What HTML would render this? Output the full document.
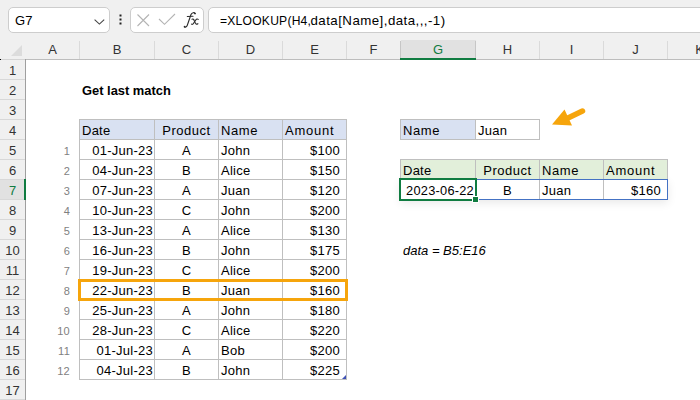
<!DOCTYPE html>
<html><head><meta charset="utf-8"><style>
*{margin:0;padding:0;box-sizing:border-box}
html,body{width:700px;height:400px;overflow:hidden;background:#fff;font-family:"Liberation Sans", sans-serif}
.a{position:absolute}
.t{position:absolute;white-space:nowrap;font-size:13px;line-height:20px;height:20px;color:#000;letter-spacing:0.25px}
.hl{position:absolute;white-space:nowrap;font-size:13px;line-height:19px;height:19px;color:#333;text-align:center}
.rn{position:absolute;white-space:nowrap;font-size:13px;line-height:19px;height:19px;color:#333;text-align:center;width:25px;left:0}
</style></head>
<body>
<div class="a" style="left:0;top:0;width:700px;height:40px;background:#f0f0f0"></div>
<div class="a" style="left:8px;top:7px;width:102px;height:26px;background:#fff;border:1px solid #cdcdcd;border-radius:5px"></div>
<div class="t" style="left:15px;top:11px;font-size:13px;line-height:20px;color:#000">G7</div>
<svg class="a" style="left:0;top:0" width="700" height="40"><polyline points="94.6,19.6 99.4,24.1 104.2,19.6" fill="none" stroke="#444" stroke-width="1.1"/><rect x="119.5" y="14.5" width="2" height="2" fill="#222"/><rect x="119.5" y="18.5" width="2" height="2" fill="#222"/><rect x="119.5" y="22.5" width="2" height="2" fill="#222"/></svg>
<div class="a" style="left:130px;top:7px;width:74px;height:26px;background:#fff;border:1px solid #cdcdcd;border-radius:5px"></div>
<svg class="a" style="left:0;top:0" width="700" height="40"><path d="M137.5,14.5 L149,26 M149,14.5 L137.5,26" stroke="#b4b4b4" stroke-width="1.1" fill="none"/><polyline points="159,19 164.5,24.3 175,14" stroke="#b4b4b4" stroke-width="1.1" fill="none"/></svg>
<svg class="a" style="left:0;top:0" width="700" height="40" fill="none" stroke="#2b2b2b" stroke-width="1.1" stroke-linecap="round"><path d="M195.2,13.6 C194.6,12.3 191.9,12.2 191.0,14.5 L187.3,25.2 C186.6,27.2 185.2,27.6 184.2,26.8"/><path d="M187.3,16.5 L193.0,16.3"/><path d="M192.0,19.2 C193.2,18.7 193.8,19.5 194.2,20.6 L195.4,23.3 C195.9,24.3 196.8,24.4 197.9,23.7"/><path d="M198.2,19.4 C197.5,18.7 196.6,18.9 195.9,19.8 L193.4,23.5 C192.8,24.4 192.1,24.5 191.5,24.1"/><circle cx="194.9" cy="13.5" r="0.85" fill="#2b2b2b" stroke="none"/><circle cx="184.7" cy="26.5" r="0.85" fill="#2b2b2b" stroke="none"/></svg>
<div class="a" style="left:208px;top:7px;width:520px;height:26px;background:#fff;border:1px solid #cdcdcd;border-radius:5px"></div>
<div class="t" style="left:220px;top:11px;font-size:13.3px;color:#000;transform:scaleX(0.91);transform-origin:0 0">=XLOOKUP(H4,</div>
<div class="t" style="left:310.5px;top:11px;font-size:13.3px;color:#000;letter-spacing:0.45px">data[Name],data,,,-1)</div>
<div class="a" style="left:0;top:40px;width:700px;height:19px;background:#f0f0f0"></div>
<div class="a" style="left:401px;top:40px;width:75px;height:19px;background:#e1e1e1"></div>
<div class="a" style="left:79px;top:41px;width:1px;height:18px;background:#dadada"></div>
<div class="a" style="left:154px;top:41px;width:1px;height:18px;background:#dadada"></div>
<div class="a" style="left:218px;top:41px;width:1px;height:18px;background:#dadada"></div>
<div class="a" style="left:282px;top:41px;width:1px;height:18px;background:#dadada"></div>
<div class="a" style="left:346px;top:41px;width:1px;height:18px;background:#dadada"></div>
<div class="a" style="left:400px;top:41px;width:1px;height:18px;background:#c6c6c6"></div>
<div class="a" style="left:475px;top:41px;width:1px;height:18px;background:#c6c6c6"></div>
<div class="a" style="left:539px;top:41px;width:1px;height:18px;background:#dadada"></div>
<div class="a" style="left:603px;top:41px;width:1px;height:18px;background:#dadada"></div>
<div class="a" style="left:667px;top:41px;width:1px;height:18px;background:#dadada"></div>
<div class="a" style="left:0;top:59px;width:25px;height:1px;background:#d4d4d4"></div>
<div class="a" style="left:25px;top:59px;width:675px;height:1px;background:#bdbdbd"></div>
<div class="a" style="left:400px;top:58px;width:76px;height:2px;background:#107c41"></div>
<svg class="a" style="left:0;top:40px" width="25" height="19"><polygon points="22,5 22,16 11,16" fill="#dcdcdc"/></svg>
<div class="hl" style="left:26px;top:40px;width:53px;color:#333">A</div>
<div class="hl" style="left:80px;top:40px;width:74px;color:#333">B</div>
<div class="hl" style="left:155px;top:40px;width:63px;color:#333">C</div>
<div class="hl" style="left:219px;top:40px;width:63px;color:#333">D</div>
<div class="hl" style="left:283px;top:40px;width:63px;color:#333">E</div>
<div class="hl" style="left:347px;top:40px;width:53px;color:#333">F</div>
<div class="hl" style="left:401px;top:40px;width:74px;color:#107c41">G</div>
<div class="hl" style="left:476px;top:40px;width:63px;color:#333">H</div>
<div class="hl" style="left:540px;top:40px;width:63px;color:#333">I</div>
<div class="hl" style="left:604px;top:40px;width:63px;color:#333">J</div>
<div class="hl" style="left:668px;top:40px;width:63px;color:#333">K</div>
<div class="a" style="left:0;top:60px;width:25px;height:340px;background:#f0f0f0"></div>
<div class="a" style="left:25px;top:59px;width:1px;height:341px;background:#9f9f9f"></div>
<div class="a" style="left:0;top:179px;width:25px;height:21px;background:#e1e1e1"></div>
<div class="a" style="left:0;top:59px;width:1px;height:1px;background:#000"></div>
<div class="rn" style="top:61px">1</div>
<div class="a" style="left:0;top:79px;width:25px;height:1px;background:#d8d8d8"></div>
<div class="rn" style="top:81px">2</div>
<div class="a" style="left:0;top:99px;width:25px;height:1px;background:#d8d8d8"></div>
<div class="rn" style="top:101px">3</div>
<div class="a" style="left:0;top:119px;width:25px;height:1px;background:#d8d8d8"></div>
<div class="rn" style="top:121px">4</div>
<div class="a" style="left:0;top:139px;width:25px;height:1px;background:#d8d8d8"></div>
<div class="rn" style="top:141px">5</div>
<div class="a" style="left:0;top:159px;width:25px;height:1px;background:#d8d8d8"></div>
<div class="rn" style="top:161px">6</div>
<div class="a" style="left:0;top:179px;width:25px;height:1px;background:#d8d8d8"></div>
<div class="rn" style="top:181px;color:#107c41">7</div>
<div class="a" style="left:0;top:199px;width:25px;height:1px;background:#d8d8d8"></div>
<div class="rn" style="top:201px">8</div>
<div class="a" style="left:0;top:219px;width:25px;height:1px;background:#d8d8d8"></div>
<div class="rn" style="top:221px">9</div>
<div class="a" style="left:0;top:239px;width:25px;height:1px;background:#d8d8d8"></div>
<div class="rn" style="top:241px">10</div>
<div class="a" style="left:0;top:259px;width:25px;height:1px;background:#d8d8d8"></div>
<div class="rn" style="top:261px">11</div>
<div class="a" style="left:0;top:279px;width:25px;height:1px;background:#d8d8d8"></div>
<div class="rn" style="top:281px">12</div>
<div class="a" style="left:0;top:299px;width:25px;height:1px;background:#d8d8d8"></div>
<div class="rn" style="top:301px">13</div>
<div class="a" style="left:0;top:319px;width:25px;height:1px;background:#d8d8d8"></div>
<div class="rn" style="top:321px">14</div>
<div class="a" style="left:0;top:339px;width:25px;height:1px;background:#d8d8d8"></div>
<div class="rn" style="top:341px">15</div>
<div class="a" style="left:0;top:359px;width:25px;height:1px;background:#d8d8d8"></div>
<div class="rn" style="top:361px">16</div>
<div class="a" style="left:0;top:379px;width:25px;height:1px;background:#d8d8d8"></div>
<div class="rn" style="top:381px">17</div>
<div class="a" style="left:0;top:399px;width:25px;height:1px;background:#d8d8d8"></div>
<div class="a" style="left:24px;top:179px;width:2px;height:21px;background:#107c41"></div>
<div class="t" style="left:82px;top:81px;font-weight:bold;font-size:12.9px;letter-spacing:0">Get last match</div>
<div class="a" style="left:79px;top:119px;width:76px;height:21px;background:#d9e1f2"></div>
<div class="a" style="left:154px;top:119px;width:65px;height:21px;background:#d9e1f2"></div>
<div class="a" style="left:218px;top:119px;width:65px;height:21px;background:#d9e1f2"></div>
<div class="a" style="left:282px;top:119px;width:65px;height:21px;background:#d9e1f2"></div>
<div class="a" style="left:79px;top:119px;width:268px;height:1px;background:#bfbfbf"></div>
<div class="a" style="left:79px;top:139px;width:268px;height:1px;background:#bfbfbf"></div>
<div class="a" style="left:79px;top:159px;width:268px;height:1px;background:#bfbfbf"></div>
<div class="a" style="left:79px;top:179px;width:268px;height:1px;background:#bfbfbf"></div>
<div class="a" style="left:79px;top:199px;width:268px;height:1px;background:#bfbfbf"></div>
<div class="a" style="left:79px;top:219px;width:268px;height:1px;background:#bfbfbf"></div>
<div class="a" style="left:79px;top:239px;width:268px;height:1px;background:#bfbfbf"></div>
<div class="a" style="left:79px;top:259px;width:268px;height:1px;background:#bfbfbf"></div>
<div class="a" style="left:79px;top:279px;width:268px;height:1px;background:#bfbfbf"></div>
<div class="a" style="left:79px;top:299px;width:268px;height:1px;background:#bfbfbf"></div>
<div class="a" style="left:79px;top:319px;width:268px;height:1px;background:#bfbfbf"></div>
<div class="a" style="left:79px;top:339px;width:268px;height:1px;background:#bfbfbf"></div>
<div class="a" style="left:79px;top:359px;width:268px;height:1px;background:#bfbfbf"></div>
<div class="a" style="left:79px;top:379px;width:268px;height:1px;background:#bfbfbf"></div>
<div class="a" style="left:79px;top:119px;width:1px;height:261px;background:#bfbfbf"></div>
<div class="a" style="left:154px;top:119px;width:1px;height:261px;background:#bfbfbf"></div>
<div class="a" style="left:218px;top:119px;width:1px;height:261px;background:#bfbfbf"></div>
<div class="a" style="left:282px;top:119px;width:1px;height:261px;background:#bfbfbf"></div>
<div class="a" style="left:346px;top:119px;width:1px;height:261px;background:#bfbfbf"></div>
<div class="t" style="left:82px;top:121px;">Date</div>
<div class="t" style="left:155px;top:121px;width:63px;text-align:center;letter-spacing:0.5px">Product</div>
<div class="t" style="left:221px;top:121px;letter-spacing:0.6px">Name</div>
<div class="t" style="left:285px;top:121px;letter-spacing:0.75px">Amount</div>
<div class="t" style="left:26px;top:141px;width:44px;text-align:right;color:#7f7f7f;font-size:11px">1</div>
<div class="t" style="left:80px;top:141px;width:73px;text-align:right;">01-Jun-23</div>
<div class="t" style="left:155px;top:141px;width:63px;text-align:center;">A</div>
<div class="t" style="left:221px;top:141px;">John</div>
<div class="t" style="left:283px;top:141px;width:57px;text-align:right;">$100</div>
<div class="t" style="left:26px;top:161px;width:44px;text-align:right;color:#7f7f7f;font-size:11px">2</div>
<div class="t" style="left:80px;top:161px;width:73px;text-align:right;">04-Jun-23</div>
<div class="t" style="left:155px;top:161px;width:63px;text-align:center;">B</div>
<div class="t" style="left:221px;top:161px;">Alice</div>
<div class="t" style="left:283px;top:161px;width:57px;text-align:right;">$150</div>
<div class="t" style="left:26px;top:181px;width:44px;text-align:right;color:#7f7f7f;font-size:11px">3</div>
<div class="t" style="left:80px;top:181px;width:73px;text-align:right;">07-Jun-23</div>
<div class="t" style="left:155px;top:181px;width:63px;text-align:center;">A</div>
<div class="t" style="left:221px;top:181px;">Juan</div>
<div class="t" style="left:283px;top:181px;width:57px;text-align:right;">$120</div>
<div class="t" style="left:26px;top:201px;width:44px;text-align:right;color:#7f7f7f;font-size:11px">4</div>
<div class="t" style="left:80px;top:201px;width:73px;text-align:right;">10-Jun-23</div>
<div class="t" style="left:155px;top:201px;width:63px;text-align:center;">C</div>
<div class="t" style="left:221px;top:201px;">John</div>
<div class="t" style="left:283px;top:201px;width:57px;text-align:right;">$200</div>
<div class="t" style="left:26px;top:221px;width:44px;text-align:right;color:#7f7f7f;font-size:11px">5</div>
<div class="t" style="left:80px;top:221px;width:73px;text-align:right;">13-Jun-23</div>
<div class="t" style="left:155px;top:221px;width:63px;text-align:center;">A</div>
<div class="t" style="left:221px;top:221px;">Alice</div>
<div class="t" style="left:283px;top:221px;width:57px;text-align:right;">$130</div>
<div class="t" style="left:26px;top:241px;width:44px;text-align:right;color:#7f7f7f;font-size:11px">6</div>
<div class="t" style="left:80px;top:241px;width:73px;text-align:right;">16-Jun-23</div>
<div class="t" style="left:155px;top:241px;width:63px;text-align:center;">B</div>
<div class="t" style="left:221px;top:241px;">John</div>
<div class="t" style="left:283px;top:241px;width:57px;text-align:right;">$175</div>
<div class="t" style="left:26px;top:261px;width:44px;text-align:right;color:#7f7f7f;font-size:11px">7</div>
<div class="t" style="left:80px;top:261px;width:73px;text-align:right;">19-Jun-23</div>
<div class="t" style="left:155px;top:261px;width:63px;text-align:center;">C</div>
<div class="t" style="left:221px;top:261px;">Alice</div>
<div class="t" style="left:283px;top:261px;width:57px;text-align:right;">$200</div>
<div class="t" style="left:26px;top:281px;width:44px;text-align:right;color:#7f7f7f;font-size:11px">8</div>
<div class="t" style="left:80px;top:281px;width:73px;text-align:right;">22-Jun-23</div>
<div class="t" style="left:155px;top:281px;width:63px;text-align:center;">B</div>
<div class="t" style="left:221px;top:281px;">Juan</div>
<div class="t" style="left:283px;top:281px;width:57px;text-align:right;">$160</div>
<div class="t" style="left:26px;top:301px;width:44px;text-align:right;color:#7f7f7f;font-size:11px">9</div>
<div class="t" style="left:80px;top:301px;width:73px;text-align:right;">25-Jun-23</div>
<div class="t" style="left:155px;top:301px;width:63px;text-align:center;">A</div>
<div class="t" style="left:221px;top:301px;">John</div>
<div class="t" style="left:283px;top:301px;width:57px;text-align:right;">$180</div>
<div class="t" style="left:26px;top:321px;width:44px;text-align:right;color:#7f7f7f;font-size:11px">10</div>
<div class="t" style="left:80px;top:321px;width:73px;text-align:right;">28-Jun-23</div>
<div class="t" style="left:155px;top:321px;width:63px;text-align:center;">C</div>
<div class="t" style="left:221px;top:321px;">Alice</div>
<div class="t" style="left:283px;top:321px;width:57px;text-align:right;">$220</div>
<div class="t" style="left:26px;top:341px;width:44px;text-align:right;color:#7f7f7f;font-size:11px">11</div>
<div class="t" style="left:80px;top:341px;width:73px;text-align:right;">01-Jul-23</div>
<div class="t" style="left:155px;top:341px;width:63px;text-align:center;">A</div>
<div class="t" style="left:221px;top:341px;">Bob</div>
<div class="t" style="left:283px;top:341px;width:57px;text-align:right;">$200</div>
<div class="t" style="left:26px;top:361px;width:44px;text-align:right;color:#7f7f7f;font-size:11px">12</div>
<div class="t" style="left:80px;top:361px;width:73px;text-align:right;">04-Jul-23</div>
<div class="t" style="left:155px;top:361px;width:63px;text-align:center;">B</div>
<div class="t" style="left:221px;top:361px;">John</div>
<div class="t" style="left:283px;top:361px;width:57px;text-align:right;">$225</div>
<svg class="a" style="left:341px;top:374px" width="6" height="6"><polygon points="5,1 5,5 1,5" fill="#3f51b5"/></svg>
<div class="a" style="left:78px;top:279px;width:270px;height:22px;border:3px solid #f6a50c"></div>
<div class="a" style="left:400px;top:119px;width:76px;height:21px;background:#d9e1f2"></div>
<div class="a" style="left:400px;top:119px;width:140px;height:1px;background:#bfbfbf"></div>
<div class="a" style="left:400px;top:139px;width:140px;height:1px;background:#bfbfbf"></div>
<div class="a" style="left:400px;top:119px;width:1px;height:21px;background:#bfbfbf"></div>
<div class="a" style="left:475px;top:119px;width:1px;height:21px;background:#bfbfbf"></div>
<div class="a" style="left:539px;top:119px;width:1px;height:21px;background:#bfbfbf"></div>
<div class="t" style="left:403px;top:121px;letter-spacing:0.6px">Name</div>
<div class="t" style="left:478px;top:121px;">Juan</div>
<svg class="a" style="left:540px;top:100px" width="50" height="35"><line x1="28" y1="18" x2="42.5" y2="11" stroke="#f6a50c" stroke-width="5.5" stroke-linecap="round"/><polygon points="12,24.5 24.5,9.5 32,25.5" fill="#f6a50c"/></svg>
<div class="a" style="left:400px;top:179px;width:268px;height:21px;box-shadow:0 3px 10px rgba(0,0,0,0.09)"></div>
<div class="a" style="left:400px;top:159px;width:76px;height:21px;background:#e2efda"></div>
<div class="a" style="left:475px;top:159px;width:65px;height:21px;background:#e2efda"></div>
<div class="a" style="left:539px;top:159px;width:65px;height:21px;background:#e2efda"></div>
<div class="a" style="left:603px;top:159px;width:65px;height:21px;background:#e2efda"></div>
<div class="a" style="left:400px;top:159px;width:268px;height:1px;background:#bfbfbf"></div>
<div class="a" style="left:400px;top:179px;width:268px;height:1px;background:#bfbfbf"></div>
<div class="a" style="left:400px;top:199px;width:268px;height:1px;background:#bfbfbf"></div>
<div class="a" style="left:400px;top:159px;width:1px;height:41px;background:#bfbfbf"></div>
<div class="a" style="left:475px;top:159px;width:1px;height:41px;background:#bfbfbf"></div>
<div class="a" style="left:539px;top:159px;width:1px;height:41px;background:#bfbfbf"></div>
<div class="a" style="left:603px;top:159px;width:1px;height:41px;background:#bfbfbf"></div>
<div class="a" style="left:667px;top:159px;width:1px;height:41px;background:#bfbfbf"></div>
<div class="t" style="left:403px;top:161px;">Date</div>
<div class="t" style="left:476px;top:161px;width:63px;text-align:center;letter-spacing:0.5px">Product</div>
<div class="t" style="left:542px;top:161px;letter-spacing:0.6px">Name</div>
<div class="t" style="left:606px;top:161px;letter-spacing:0.75px">Amount</div>
<div class="t" style="left:401px;top:181px;width:73px;text-align:right;font-size:12.8px">2023-06-22</div>
<div class="t" style="left:476px;top:181px;width:63px;text-align:center;">B</div>
<div class="t" style="left:542px;top:181px;">Juan</div>
<div class="t" style="left:604px;top:181px;width:57px;text-align:right;">$160</div>
<div class="a" style="left:400px;top:179px;width:268px;height:1px;background:#4472c4"></div>
<div class="a" style="left:400px;top:199px;width:268px;height:1px;background:#4472c4"></div>
<div class="a" style="left:667px;top:179px;width:1px;height:21px;background:#4472c4"></div>
<div class="a" style="left:399px;top:178px;width:78px;height:23px;border:2px solid #107c41"></div>
<div class="a" style="left:472px;top:196px;width:7px;height:7px;background:#fff"></div>
<div class="a" style="left:473px;top:197px;width:5px;height:5px;background:#107c41"></div>
<div class="t" style="left:403px;top:241px;font-style:italic;letter-spacing:0">data = B5:E16</div>
</body></html>
